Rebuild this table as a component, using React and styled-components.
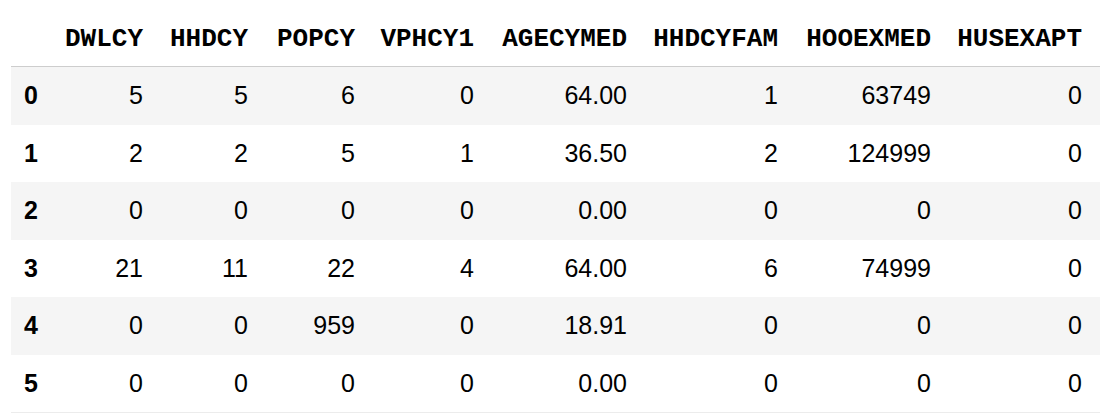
import React from "react";
import styled, { createGlobalStyle } from "styled-components";

const GlobalStyle = createGlobalStyle`
  html, body {
    margin: 0;
    padding: 0;
    background: #fff;
    overflow: hidden;
  }
`;

const Wrapper = styled.div`
  padding-left: 11px;
`;

const Table = styled.table`
  width: 1089px;
  border-collapse: collapse;
  border-spacing: 0;
  table-layout: fixed;
  border-bottom: 1px solid #ececec;
  color: #000;
`;

const HeadCell = styled.th`
  height: 54px;
  padding: 12px 12px 0;
  text-align: right;
  vertical-align: middle;
  font-family: "Liberation Mono", "Courier New", monospace;
  font-weight: bold;
  font-size: 26px;
  white-space: nowrap;
  border-bottom: 1px solid #cdcdcd;
`;

const Row = styled.tr`
  background: ${(p) => (p.$striped ? "#f5f5f5" : "#fff")};
`;

const IndexCell = styled.th`
  height: 57.5px;
  padding: 0 12px 0 13px;
  text-align: left;
  vertical-align: middle;
  font-family: "Liberation Sans", Arial, sans-serif;
  font-weight: bold;
  font-size: 25px;
`;

const Cell = styled.td`
  height: 57.5px;
  padding: 0 12px;
  text-align: right;
  vertical-align: middle;
  font-family: "Liberation Sans", Arial, sans-serif;
  font-size: 25px;
  white-space: nowrap;
`;

const Filler = styled.td`
  padding: 0;
`;

const FillerHead = styled.th`
  padding: 0;
  border-bottom: 1px solid #cdcdcd;
`;

const columns = [
  { name: "DWLCY", width: 105 },
  { name: "HHDCY", width: 105 },
  { name: "POPCY", width: 107 },
  { name: "VPHCY1", width: 119 },
  { name: "AGECYMED", width: 153 },
  { name: "HHDCYFAM", width: 151 },
  { name: "HOOEXMED", width: 153 },
  { name: "HUSEXAPT", width: 151 },
];

const rows = [
  [5, 5, 6, 0, "64.00", 1, 63749, 0],
  [2, 2, 5, 1, "36.50", 2, 124999, 0],
  [0, 0, 0, 0, "0.00", 0, 0, 0],
  [21, 11, 22, 4, "64.00", 6, 74999, 0],
  [0, 0, 959, 0, "18.91", 0, 0, 0],
  [0, 0, 0, 0, "0.00", 0, 0, 0],
];

const App = () => {
  return (
    <>
      <GlobalStyle />
      <Wrapper>
        <Table>
          <colgroup>
            <col style={{ width: 39 }} />
            {columns.map((c) => (
              <col key={c.name} style={{ width: c.width }} />
            ))}
            <col style={{ width: 6 }} />
          </colgroup>
          <thead>
            <tr>
              <HeadCell />
              {columns.map((c) => (
                <HeadCell key={c.name}>{c.name}</HeadCell>
              ))}
              <FillerHead />
            </tr>
          </thead>
          <tbody>
            {rows.map((r, i) => (
              <Row key={i} $striped={i % 2 === 0}>
                <IndexCell>{i}</IndexCell>
                {r.map((v, j) => (
                  <Cell key={j}>{v}</Cell>
                ))}
                <Filler />
              </Row>
            ))}
          </tbody>
        </Table>
      </Wrapper>
    </>
  );
};

export default App;
